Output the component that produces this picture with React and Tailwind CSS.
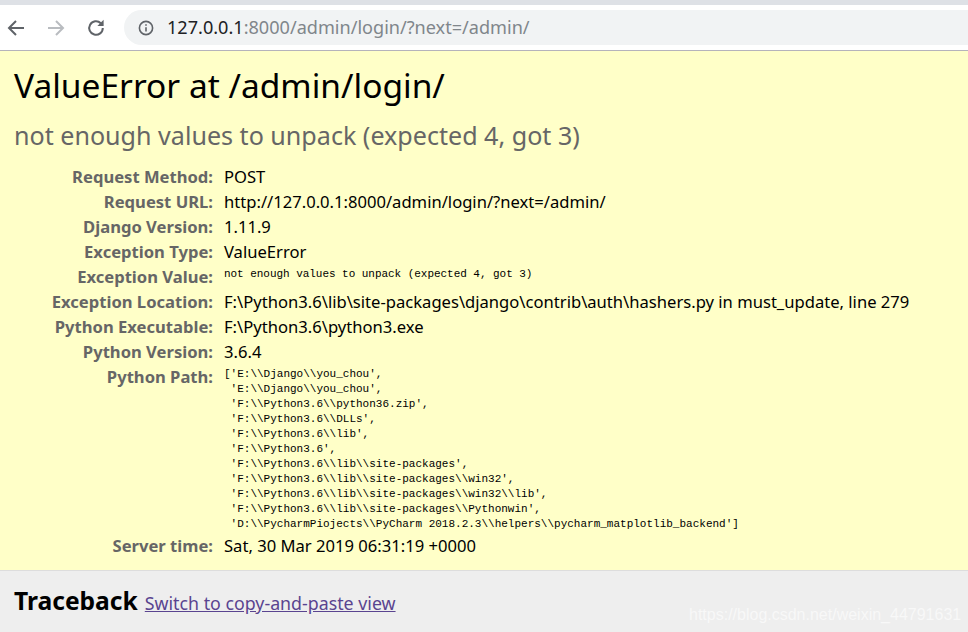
import React from 'react';

// filas de la tabla de meta del error de django
const filasArriba = [
  ['Request Method:', 'POST'],
  ['Request URL:', 'http://127.0.0.1:8000/admin/login/?next=/admin/'],
  ['Django Version:', '1.11.9'],
  ['Exception Type:', 'ValueError'],
  ['Exception Value:', 'not enough values to unpack (expected 4, got 3)', true],
  ['Exception Location:', 'F:\\Python3.6\\lib\\site-packages\\django\\contrib\\auth\\hashers.py in must_update, line 279'],
  ['Python Executable:', 'F:\\Python3.6\\python3.exe'],
  ['Python Version:', '3.6.4'],
];

const pythonPath = `['E:\\\\Django\\\\you_chou',
 'E:\\\\Django\\\\you_chou',
 'F:\\\\Python3.6\\\\python36.zip',
 'F:\\\\Python3.6\\\\DLLs',
 'F:\\\\Python3.6\\\\lib',
 'F:\\\\Python3.6',
 'F:\\\\Python3.6\\\\lib\\\\site-packages',
 'F:\\\\Python3.6\\\\lib\\\\site-packages\\\\win32',
 'F:\\\\Python3.6\\\\lib\\\\site-packages\\\\win32\\\\lib',
 'F:\\\\Python3.6\\\\lib\\\\site-packages\\\\Pythonwin',
 'D:\\\\PycharmPiojects\\\\PyCharm 2018.2.3\\\\helpers\\\\pycharm_matplotlib_backend']`;

const Etiqueta = ({ children }) => (
  <div className="text-right font-bold text-[#666] leading-[25px] whitespace-nowrap">{children}</div>
);

export default function App() {
  return (
    <div className="w-[968px] h-[632px] overflow-hidden relative bg-white font-['Noto_Sans',sans-serif]">
      {/* barra del navegador */}
      <div className="h-[5px] bg-[#dee1e6]" />
      <div className="h-[46px] flex items-center border-b border-[#b5b3bb] bg-white">
        <div className="flex items-center w-[124px] pl-[7px] gap-[22px]">
          <svg width="18" height="18" viewBox="0 0 18 18" fill="none" stroke="#5f6368" strokeWidth="2">
            <path d="M17 9H2M9 2L2 9l7 7" />
          </svg>
          <svg width="18" height="18" viewBox="0 0 18 18" fill="none" stroke="#b9bcc0" strokeWidth="2">
            <path d="M1 9h15M9 2l7 7-7 7" />
          </svg>
          <svg width="18" height="18" viewBox="0 0 18 18" fill="none" stroke="#5f6368" strokeWidth="2">
            <path d="M15.8 9a6.8 6.8 0 1 1-2-4.8" />
            <path d="M16.6 0.8v6.2h-6.2z" fill="#5f6368" stroke="none" />
          </svg>
        </div>
        <div className="flex-1 h-[35px] rounded-l-full bg-[#f1f3f4] flex items-center pl-[14px]">
          <svg width="16" height="16" viewBox="0 0 16 16" fill="none" stroke="#5f6368" strokeWidth="1.6" className="shrink-0">
            <circle cx="8" cy="8" r="6.6" />
            <path d="M8 7.2v4.2M8 4.2v1.6" />
          </svg>
          <span className="ml-[13px] text-[18.1px] text-[#80868b] whitespace-nowrap">
            <span className="text-[#202124]">127.0.0.1</span>:8000/admin/login/?next=/admin/
          </span>
        </div>
      </div>

      {/* resumen amarillo */}
      <div className="h-[520px] bg-[#ffffc8] border-b border-[#dddddd] pl-[14px] pt-[11px]">
        <h1 className="text-[33.5px] leading-[46px] text-black whitespace-nowrap">ValueError at /admin/login/</h1>
        <h2 className="mt-[10px] text-[25.1px] leading-[34px] text-[#666] whitespace-nowrap">not enough values to unpack (expected 4, got 3)</h2>
        <div className="mt-[12px] -ml-[14px] grid grid-cols-[213px_1fr] gap-x-[11px] text-[16.6px] text-black">
          {filasArriba.map(([k, v, mono]) => (
            <React.Fragment key={k}>
              <Etiqueta>{k}</Etiqueta>
              {mono ? (
                <div className="h-[25px] font-['Liberation_Mono',monospace] text-[11px] leading-[21px] tracking-[-0.04px]">{v}</div>
              ) : (
                <div className="leading-[25px] whitespace-nowrap">{v}</div>
              )}
            </React.Fragment>
          ))}
          <Etiqueta>Python Path:</Etiqueta>
          <pre className="pt-[3px] font-['Liberation_Mono',monospace] text-[11px] leading-[15px]">{pythonPath}</pre>
          <div className="mt-[1px] col-span-2 grid grid-cols-[213px_1fr] gap-x-[11px]">
            <Etiqueta>Server time:</Etiqueta>
            <div className="leading-[25px]">Sat, 30 Mar 2019 06:31:19 +0000</div>
          </div>
        </div>
      </div>

      {/* pie gris con el traceback */}
      <div className="h-[61px] bg-[#eeeeee] flex items-baseline pl-[14px] pt-[12px]">
        <h2 className="text-[24.6px] leading-[36px] font-bold text-black">Traceback</h2>
        <a className="ml-[7px] text-[17.8px] text-[#5a4490] underline" href="#">Switch to copy-and-paste view</a>
      </div>
      <div className="absolute left-[689px] top-[603px] font-['Liberation_Sans',sans-serif] text-[16px] text-white/60 whitespace-nowrap">https://blog.csdn.net/weixin_44791631</div>
    </div>
  );
}
